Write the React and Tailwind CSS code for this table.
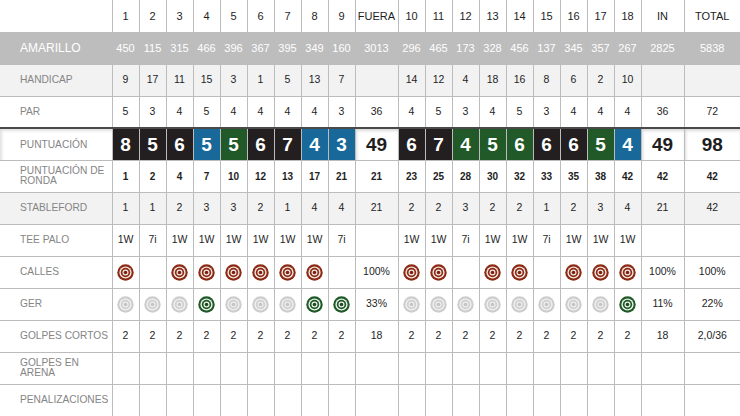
import React from "react";

const holesOut = [1, 2, 3, 4, 5, 6, 7, 8, 9];
const holesIn = [10, 11, 12, 13, 14, 15, 16, 17, 18];

const rows = [
  {
    label: "AMARILLO",
    out: [450, 115, 315, 466, 396, 367, 395, 349, 160],
    fuera: 3013,
    inn: [296, 465, 173, 328, 456, 137, 345, 357, 267],
    inTotal: 2825,
    total: 5838,
    kind: "tee",
  },
  {
    label: "HANDICAP",
    out: [9, 17, 11, 15, 3, 1, 5, 13, 7],
    fuera: "",
    inn: [14, 12, 4, 18, 16, 8, 6, 2, 10],
    inTotal: "",
    total: "",
    kind: "shade",
  },
  {
    label: "PAR",
    out: [5, 3, 4, 5, 4, 4, 4, 4, 3],
    fuera: 36,
    inn: [4, 5, 3, 4, 5, 3, 4, 4, 4],
    inTotal: 36,
    total: 72,
  },
];

const scoreOut = [
  [8, "d"], [5, "d"], [6, "d"], [5, "b"], [5, "g"], [6, "d"], [7, "d"], [4, "b"], [3, "b"],
];
const scoreIn = [
  [6, "d"], [7, "d"], [4, "g"], [5, "g"], [6, "g"], [6, "d"], [6, "d"], [5, "g"], [4, "b"],
];

const scoreBg = {
  d: "bg-[#231f20]",
  b: "bg-[#18699a]",
  g: "bg-[#215a28]",
};

const lowerRows = [
  {
    label: ["PUNTUACIÓN DE", "RONDA"],
    out: [1, 2, 4, 7, 10, 12, 13, 17, 21],
    fuera: 21,
    inn: [23, 25, 28, 30, 32, 33, 35, 38, 42],
    inTotal: 42,
    total: 42,
    bold: true,
  },
  {
    label: "STABLEFORD",
    out: [1, 1, 2, 3, 3, 2, 1, 4, 4],
    fuera: 21,
    inn: [2, 2, 3, 2, 2, 1, 2, 3, 4],
    inTotal: 21,
    total: 42,
    kind: "shade",
  },
  {
    label: "TEE PALO",
    out: ["1W", "7i", "1W", "1W", "1W", "1W", "1W", "1W", "7i"],
    fuera: "",
    inn: ["1W", "1W", "7i", "1W", "1W", "7i", "1W", "1W", "1W"],
    inTotal: "",
    total: "",
  },
  {
    label: "CALLES",
    out: ["r", "", "r", "r", "r", "r", "r", "r", ""],
    fuera: "100%",
    inn: ["r", "r", "", "r", "r", "", "r", "r", "r"],
    inTotal: "100%",
    total: "100%",
    icons: true,
  },
  {
    label: "GER",
    out: ["s", "s", "s", "G", "s", "s", "s", "G", "G"],
    fuera: "33%",
    inn: ["s", "s", "s", "s", "s", "s", "s", "s", "G"],
    inTotal: "11%",
    total: "22%",
    icons: true,
  },
  {
    label: "GOLPES CORTOS",
    out: [2, 2, 2, 2, 2, 2, 2, 2, 2],
    fuera: 18,
    inn: [2, 2, 2, 2, 2, 2, 2, 2, 2],
    inTotal: 18,
    total: "2,0/36",
  },
  {
    label: ["GOLPES EN", "ARENA"],
    out: Array(9).fill(""),
    fuera: "",
    inn: Array(9).fill(""),
    inTotal: "",
    total: "",
  },
  {
    label: "PENALIZACIONES",
    out: Array(9).fill(""),
    fuera: "",
    inn: Array(9).fill(""),
    inTotal: "",
    total: "",
  },
];

const Target = ({ type }) => {
  const palette = {
    r: ["#8c2a14", "#f4e9e6", "#8c2a14", "#f4e9e6", "#7a2410"],
    G: ["#1f5a26", "#eef4ee", "#1f5a26", "#eef4ee", "#1a4d20"],
    s: ["#cdcdcd", "#f0f0f0", "#cfcfcf", "#efefef", "#c4c4c4"],
  }[type];
  return (
    <svg width="17" height="17" viewBox="0 0 17 17" className="mx-auto block">
      <circle cx="8.5" cy="8.5" r="8.2" fill={palette[0]} />
      <circle cx="8.5" cy="8.5" r="6.1" fill={palette[1]} />
      <circle cx="8.5" cy="8.5" r="4.7" fill={palette[2]} />
      <circle cx="8.5" cy="8.5" r="3" fill={palette[3]} />
      <circle cx="8.5" cy="8.5" r="1.8" fill={palette[4]} />
    </svg>
  );
};

const Label = ({ text, className = "" }) => (
  <td
    className={`pl-5 pr-0 text-left whitespace-nowrap text-[10.2px] leading-[10px] text-[#858585] border-r border-b border-[#bcbcbc] ${className}`}
  >
    {Array.isArray(text) ? (
      <>
        {text[0]}
        <br />
        {text[1]}
      </>
    ) : (
      text
    )}
  </td>
);

const cell = "border-r border-b border-[#bcbcbc] text-center";

const DataRow = ({ row }) => {
  const bg =
    row.kind === "tee"
      ? "bg-[#bdbdbd] text-white"
      : row.kind === "shade"
      ? "bg-[#f2f2f2] text-[#1e1e1e]"
      : "bg-white text-[#1e1e1e]";
  const txt = row.bold ? "text-[10px] font-bold" : row.kind === "tee" ? "text-[11px]" : "text-[10.5px]";
  const render = (v, i) =>
    row.icons ? (
      <td key={i} className={cell}>
        {v ? <Target type={v} /> : null}
      </td>
    ) : (
      <td key={i} className={`${cell} ${txt}`}>
        {v}
      </td>
    );
  return (
    <tr className={`h-8 ${bg}`}>
      <Label
        text={row.label}
        className={row.kind === "tee" ? "!text-white !text-[12px]" : ""}
      />
      {row.out.map(render)}
      <td className={`${cell} ${txt}`}>{row.fuera}</td>
      {row.inn.map((v, i) => render(v, i + 20))}
      <td className={`${cell} ${txt}`}>{row.inTotal}</td>
      <td className={`${cell} ${txt} !border-r-0`}>{row.total}</td>
    </tr>
  );
};

const bigCell = "border-r border-b border-[#bcbcbc] text-center font-bold text-[19px] leading-none";

export default function App() {
  return (
    <div className="w-[740px] h-[416px] overflow-hidden bg-white font-['Liberation_Sans',Arial,sans-serif]">
      <table className="w-[740px] table-fixed border-collapse">
        <colgroup>
          <col className="w-[112px]" />
          {holesOut.map((h) => (
            <col key={h} className="w-[27px]" />
          ))}
          <col className="w-[43px]" />
          {holesIn.map((h) => (
            <col key={h} className="w-[27px]" />
          ))}
          <col className="w-[43px]" />
          <col className="w-[56px]" />
        </colgroup>
        <tbody>
          <tr className="h-8 bg-white text-[#1e1e1e] text-[11px]">
            <td className="border-r border-[#bcbcbc]"></td>
            {holesOut.map((h) => (
              <td key={h} className={`${cell} !border-b-0`}>
                {h}
              </td>
            ))}
            <td className={`${cell} !border-b-0`}>FUERA</td>
            {holesIn.map((h) => (
              <td key={h} className={`${cell} !border-b-0`}>
                {h}
              </td>
            ))}
            <td className={`${cell} !border-b-0`}>IN</td>
            <td className={`${cell} !border-b-0 !border-r-0`}>TOTAL</td>
          </tr>
          {rows.map((r) => (
            <DataRow key={r.label} row={r} />
          ))}
          <tr className="h-8 border-t-2 border-[#4a4a4a]">
            <td className="pl-5 text-left text-[10.2px] text-[#858585] border-r border-b border-[#bcbcbc] shadow-[inset_2px_2px_3px_rgba(0,0,0,0.12)]">
              PUNTUACIÓN
            </td>
            {scoreOut.map(([v, c], i) => (
              <td key={i} className={`${scoreBg[c]} ${bigCell} text-white`}>
                {v}
              </td>
            ))}
            <td className={`${bigCell} text-[#1e1e1e] shadow-[inset_1px_2px_3px_rgba(0,0,0,0.15)]`}>
              49
            </td>
            {scoreIn.map(([v, c], i) => (
              <td key={i} className={`${scoreBg[c]} ${bigCell} text-white`}>
                {v}
              </td>
            ))}
            <td className={`${bigCell} text-[#1e1e1e] shadow-[inset_1px_2px_3px_rgba(0,0,0,0.15)]`}>
              49
            </td>
            <td className={`${bigCell} !border-r-0 text-[#1e1e1e] shadow-[inset_1px_2px_3px_rgba(0,0,0,0.15)]`}>
              98
            </td>
          </tr>
          {lowerRows.map((r, i) => (
            <DataRow key={i} row={r} />
          ))}
        </tbody>
      </table>
    </div>
  );
}
